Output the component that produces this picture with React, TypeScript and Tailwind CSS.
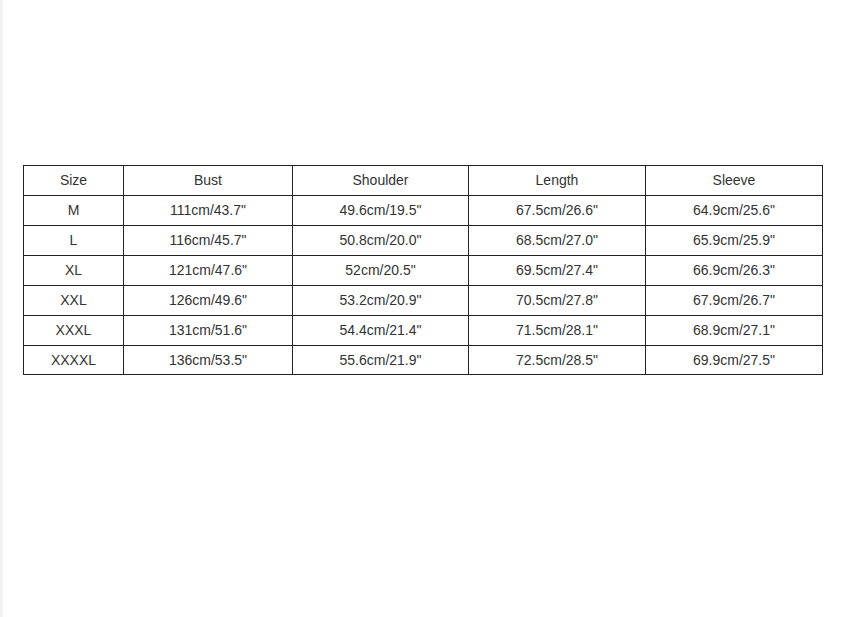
const headers = ['Size', 'Bust', 'Shoulder', 'Length', 'Sleeve'];

const rows = [
  ['M', '111cm/43.7"', '49.6cm/19.5"', '67.5cm/26.6"', '64.9cm/25.6"'],
  ['L', '116cm/45.7"', '50.8cm/20.0"', '68.5cm/27.0"', '65.9cm/25.9"'],
  ['XL', '121cm/47.6"', '52cm/20.5"', '69.5cm/27.4"', '66.9cm/26.3"'],
  ['XXL', '126cm/49.6"', '53.2cm/20.9"', '70.5cm/27.8"', '67.9cm/26.7"'],
  ['XXXL', '131cm/51.6"', '54.4cm/21.4"', '71.5cm/28.1"', '68.9cm/27.1"'],
  ['XXXXL', '136cm/53.5"', '55.6cm/21.9"', '72.5cm/28.5"', '69.9cm/27.5"'],
];

const colWidths = ['w-[100px]', 'w-[169px]', 'w-[176px]', 'w-[177px]', 'w-[177px]'];

export default function App() {
  return (
    <div className="flex h-[617px] w-[854px] bg-white font-['Liberation_Sans',Arial,sans-serif] text-[14px] text-[#333]">
      {/* left edge strip */}
      <div className="h-full w-[3px] bg-[#f2f2f2]" />

      <div className="pl-[20px] pt-[165px]">
        <table className="w-[799px] table-fixed border-collapse">
          <colgroup>
            {colWidths.map((w, i) => (
              <col key={i} className={w} />
            ))}
          </colgroup>
          <thead>
            <tr className="h-[30px]">
              {headers.map((h) => (
                <th
                  key={h}
                  className="border border-[#222] p-0 text-center align-middle font-normal"
                >
                  {h}
                </th>
              ))}
            </tr>
          </thead>
          <tbody>
            {rows.map((row, i) => (
              <tr
                key={row[0]}
                className={i === rows.length - 1 ? 'h-[29px]' : 'h-[30px]'}
              >
                {row.map((cell, j) => (
                  <td
                    key={j}
                    className="border border-[#222] p-0 text-center align-middle"
                  >
                    {cell}
                  </td>
                ))}
              </tr>
            ))}
          </tbody>
        </table>
      </div>
    </div>
  );
}
